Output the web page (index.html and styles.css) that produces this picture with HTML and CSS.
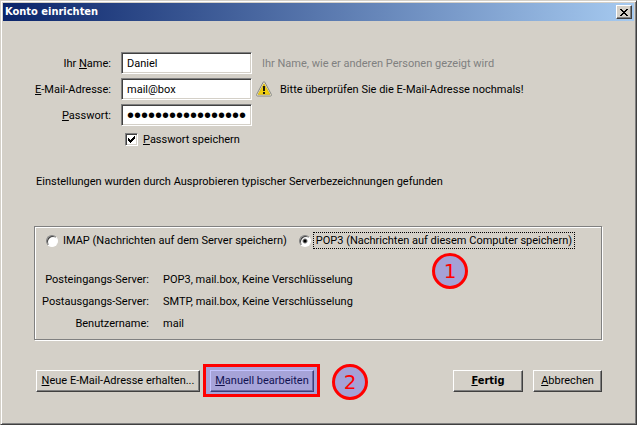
FILE: index.html
```
<!DOCTYPE html>
<html lang="de">
<head>
<meta charset="utf-8">
<title>Konto einrichten</title>
<link rel="stylesheet" href="styles.css">
</head>
<body>
<main class="window">
  <header class="titlebar">
    <h1 class="title">Konto einrichten</h1>
    <button class="close" type="button" aria-label="Schließen">
      <svg width="8" height="7" viewBox="0 0 8 7" shape-rendering="crispEdges" aria-hidden="true">
        <path d="M0 0h2v1H0zM6 0h2v1H6zM1 1h2v1H1zM5 1h2v1H5zM2 2h4v1H2zM3 3h2v1H3zM2 4h4v1H2zM1 5h2v1H1zM5 5h2v1H5zM0 6h2v1H0zM6 6h2v1H6z"/>
      </svg>
    </button>
  </header>
  <form class="content">
    <div class="fields">
      <label class="label" for="name">Ihr <u>N</u>ame:</label>
      <input class="field" id="name" type="text" value="Daniel">
      <p class="hint">Ihr Name, wie er anderen Personen gezeigt wird</p>

      <label class="label" for="email"><u>E</u>-Mail-Adresse:</label>
      <input class="field" id="email" type="text" value="mail@box">
      <div class="warning">
        <svg class="warning-icon" width="16" height="16" viewBox="0 0 16 16" aria-hidden="true">
          <path d="M7.2 1.2Q8 .2 8.8 1.2L15.4 13.6Q15.6 15 14.5 15H1.5Q.4 15 .6 13.6Z" fill="#eeeeea" stroke="#85857f" stroke-linejoin="round"/>
          <path d="M8 2.6 14 13.6H2Z" fill="#f0cf10" stroke="#c7a200" stroke-width=".6"/>
          <path d="M7 5h2v5H7zM7 11h2v2H7z" fill="#1c1a10"/>
        </svg>
        <p class="warning-text">Bitte überprüfen Sie die E-Mail-Adresse nochmals!</p>
      </div>

      <label class="label" for="password"><u>P</u>asswort:</label>
      <input class="field password" id="password" type="password" value="12345678901234567">
    </div>
    <label class="remember"><input class="check" type="checkbox" checked><span class="remember-text"><u>P</u>asswort speichern</span></label>

    <p class="status">Einstellungen wurden durch Ausprobieren typischer Serverbezeichnungen gefunden</p>

    <section class="group">
      <div class="protocols">
        <label class="choice"><input class="radio" type="radio" name="protocol"><span class="choice-text">IMAP (Nachrichten auf dem Server speichern)</span></label>
        <label class="choice"><input class="radio" type="radio" name="protocol" checked><span class="choice-text focused">POP3 (Nachrichten auf diesem Computer speichern)</span></label>
      </div>
      <dl class="details">
        <dt>Posteingangs-Server:</dt><dd>POP3, mail.box, Keine Verschlüsselung</dd>
        <dt>Postausgangs-Server:</dt><dd>SMTP, mail.box, Keine Verschlüsselung</dd>
        <dt>Benutzername:</dt><dd>mail</dd>
      </dl>
      <span class="marker marker-one">1</span>
    </section>

    <footer class="actions">
      <button class="button new-address" type="button"><u>N</u>eue E-Mail-Adresse erhalten...</button>
      <div class="highlighted">
        <button class="button manual" type="button"><u>M</u>anuell bearbeiten</button>
        <span class="highlight"></span>
        <span class="marker marker-two">2</span>
      </div>
      <button class="button done" type="submit"><u>F</u>ertig</button>
      <button class="button cancel" type="button"><u>A</u>bbrechen</button>
    </footer>
  </form>
</main>
</body>
</html>
```
FILE: styles.css
```
:root {
  --face: #d4d0c8;
  --shadow: #808080;
  --dark: #404040;
  --font: Roboto, "DejaVu Sans Condensed", sans-serif;
  --font-bold: "DejaVu Sans Condensed", "DejaVu Sans", sans-serif;
}

* {
  box-sizing: border-box;
}

body {
  margin: 0;
  background: var(--face);
  color: #000;
  font: 11px/14px var(--font);
}

h1, p, dl, dd {
  margin: 0;
}

.window {
  min-height: 100vh;
  padding: 2px;
  border: 1px solid;
  border-color: var(--face) var(--dark) var(--dark) var(--face);
  box-shadow: inset 1px 1px #fff, inset -1px -1px var(--shadow);
}

.titlebar {
  display: flex;
  align-items: center;
  justify-content: space-between;
  height: 18px;
  padding: 0 2px;
  background: linear-gradient(to right, #0a246a, #a6caf0);
}

.title {
  color: #fff;
  font: bold 11px/18px var(--font-bold);
}

.close {
  display: flex;
  align-items: center;
  justify-content: center;
  width: 16px;
  height: 14px;
  padding: 0;
}

.close,
.button {
  border: 1px solid;
  border-color: #fff var(--dark) var(--dark) #fff;
  border-radius: 0;
  background: var(--face);
  box-shadow: inset -1px -1px var(--shadow);
  color: #000;
}

.content {
  padding: 31px 32px 0 33px;
}

.fields {
  display: grid;
  grid-template-columns: 75px 131px 1fr;
  grid-auto-rows: 22px;
  align-items: center;
  gap: 4px 10px;
}

.label,
.hint,
.warning-text,
.remember-text {
  padding-top: 2px;
}

.label {
  justify-self: end;
  white-space: nowrap;
}

.field {
  width: 100%;
  height: 22px;
  padding: 0 5px;
  border: 1px solid;
  border-color: var(--shadow) #fff #fff var(--shadow);
  border-radius: 0;
  outline: 0;
  background: #fff;
  box-shadow: inset 1px 1px var(--dark), inset -1px -1px var(--face);
  color: #000;
  font: 11px/14px var(--font);
}

.password {
  font: 20px/20px "Liberation Sans", sans-serif;
}

.hint {
  color: var(--shadow);
}

.warning {
  display: flex;
  align-items: center;
  gap: 8px;
  margin-left: -6px;
}

.remember {
  display: flex;
  align-items: center;
  gap: 5px;
  width: max-content;
  margin: 5px 0 0 89px;
}

.check,
.radio {
  flex: none;
  margin: 0;
  appearance: none;
}

.check {
  width: 13px;
  height: 13px;
  border: 1px solid;
  border-color: var(--shadow) #fff #fff var(--shadow);
  background: #fff;
  box-shadow: inset 1px 1px var(--dark), inset -1px -1px var(--face);
}

.check:checked {
  background: #fff url("data:image/svg+xml,%3Csvg xmlns='http://www.w3.org/2000/svg' width='7' height='7' shape-rendering='crispEdges'%3E%3Cpath d='M0 2h1v1h1v1h1V3h1V2h1V1h1V0h1v3H6v1H5v1H4v1H3v1H2V6H1V5H0z'/%3E%3C/svg%3E") 2px 2px no-repeat;
}

.radio {
  width: 12px;
  height: 12px;
  border: 1px solid;
  border-color: var(--shadow) #fff #fff var(--shadow);
  border-radius: 50%;
  background: #fff;
  box-shadow: inset 1px 1px var(--dark);
}

.radio:checked {
  background: radial-gradient(circle, #000 1px, #fff 3px);
}

.status {
  margin-top: 28px;
}

.group {
  position: relative;
  min-height: 114px;
  margin: 37px 0 0 -2px;
  padding: 5px 11px 4px;
  border: 1px solid var(--shadow);
  box-shadow: inset 1px 1px #fff, 1px 1px #fff;
}

.protocols {
  display: flex;
  gap: 9px;
}

.choice {
  display: flex;
  align-items: center;
  gap: 2px;
}

.choice-text {
  padding: 1px 2px 0;
  border: 1px solid transparent;
  white-space: nowrap;
}

.choice-text.focused {
  border: 1px dotted #000;
}

.details {
  display: grid;
  grid-template-columns: 103px 1fr;
  grid-auto-rows: 22px;
  align-items: center;
  column-gap: 14px;
  margin-top: 20px;
}

.details dt {
  justify-self: end;
  white-space: nowrap;
}

.actions {
  display: flex;
  gap: 10px;
  margin-top: 30px;
}

.button {
  height: 22px;
  padding: 0;
  font: 11px/14px var(--font);
  white-space: nowrap;
}

.new-address {
  width: 164px;
}

.manual {
  width: 104px;
}

.highlighted {
  position: relative;
  margin-right: auto;
}

.highlight {
  position: absolute;
  inset: -6px -6px -5px -7px;
  border: 3px solid #f00;
  background: rgb(60 60 255 / 30%);
  pointer-events: none;
}

.done {
  width: 70px;
  font-family: var(--font-bold);
  font-weight: bold;
}

.cancel {
  width: 69px;
}

.marker {
  position: absolute;
  width: 36px;
  height: 36px;
  border: 3px solid #f00;
  border-radius: 50%;
  background: #a5a1d6;
  color: #f00;
  font: 20px/30px "DejaVu Sans", sans-serif;
  text-align: center;
}

.marker-one {
  top: 26px;
  left: 397px;
}

.marker-two {
  top: -6px;
  left: 122px;
}
```
